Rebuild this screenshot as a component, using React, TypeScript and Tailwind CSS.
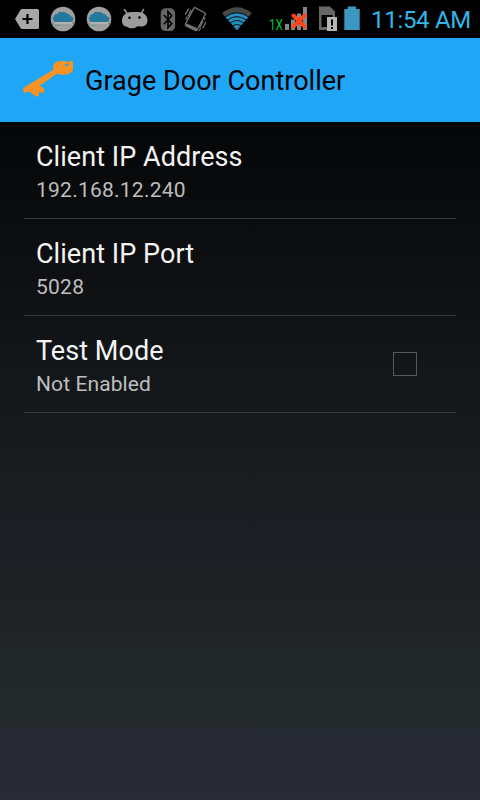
import type { ReactNode } from "react";

type IconProps = { label: string; box: string; className: string; children: ReactNode };

function StatusIcon({ label, box, className, children }: IconProps) {
  return (
    <svg aria-label={label} viewBox={box} className={`h-[38px] shrink-0 ${className}`}>
      {children}
    </svg>
  );
}

function CloudIcon({ className }: { className: string }) {
  return (
    <StatusIcon label="Cloud" box="0 0 26 38" className={`w-[26px] ${className}`}>
      <circle cx="13" cy="19" r="12.3" fill="#a0a0a0" />
      <path d="M1 16.5L5 21L2 26M25 16.5L21.5 21L24.5 26" stroke="#555" strokeWidth="0.8" strokeDasharray="1 1" fill="none" />
      <path
        d="M6 22A3.2 3.2 0 0 1 4 16.5C4.4 14.6 6 13.8 7.2 14.2C7.8 12 10.3 11 12.2 12.3C14.3 11.3 16.5 12.4 17.2 14C19 13.4 20.2 14.6 20.5 16.2C22.8 16.3 23.6 18 23 19.8C22.6 21.2 21.8 22 20.5 22Z"
        fill="#247a9d"
      />
      <path d="M4 23H22" stroke="#c3c3c3" strokeWidth="1" />
      <path d="M5 25.3H10" stroke="#4d8ca8" strokeWidth="1" strokeDasharray="1.5 0.6" />
      <path d="M11 25.3H19" stroke="#8c9499" strokeWidth="0.8" strokeDasharray="1 0.8" />
    </StatusIcon>
  );
}

function StatusBar() {
  return (
    <div className="flex h-[38px] shrink-0 items-start bg-black">
      <StatusIcon label="Add" box="15 0 24 38" className="ml-[15px] w-6">
        <path d="M15 19L20.5 10Q21 9 22.3 9H37.5Q39 9 39 10.5V27.5Q39 29 37.5 29H22.3Q21 29 20.5 28Z" fill="#a8a8a8" />
        <path d="M27.5 14V24M22.5 19H32.5" stroke="#000" strokeWidth="2.2" />
      </StatusIcon>
      <CloudIcon className="ml-[11px]" />
      <CloudIcon className="ml-[10px]" />
      <StatusIcon label="Android" box="121 0 28 38" className="ml-[9px] w-7">
        <path d="M124.5 9.5L127.5 14M143.5 9.5L141 14" stroke="#9c9c9c" strokeWidth="1.5" strokeLinecap="round" />
        <path
          d="M122 21C122 15.5 126 12 131 12H138C143 12 147.5 15 147.5 20.5C147.5 25 144 27.2 139.5 26.3C137.5 26 136.5 26.8 134.8 27.8C132.5 29 129 28 127 26.7C124 26.5 122 24.2 122 21Z"
          fill="#9c9c9c"
        />
        <circle cx="129.5" cy="17.7" r="1.3" fill="#000" />
        <circle cx="139.5" cy="17.5" r="1.3" fill="#000" />
      </StatusIcon>
      <StatusIcon label="Bluetooth" box="160 0 16 38" className="ml-[11px] w-4">
        <rect x="160.7" y="8.3" width="14.4" height="22.8" rx="5" fill="#666" />
        <path d="M163.8 15L171.7 23.5L168 27.7V11.7L171.7 15.8L163.8 24.3" fill="none" stroke="#000" strokeWidth="1.6" />
      </StatusIcon>
      <StatusIcon label="Vibrate" box="184 0 24 38" className="ml-2 w-6">
        <g stroke="#757575" fill="none" strokeWidth="1.3">
          <path d="M193.6 8.6Q194.2 7.2 195.5 7.9L204.6 12.7Q205.8 13.3 205.2 14.5L197.2 29.8Q196.5 31 195.3 30.4L186.2 25.6Q185 25 185.6 23.8Z" />
          <path d="M185.5 26.2L187 23.5L197.7 28.5L195.8 30.9Z" fill="#757575" stroke="none" />
          <path d="M185.2 14.7L188.7 8.7M187.7 16.5L191.3 10M185.7 19.5L187.2 16.9" />
          <path d="M202.7 28.2L206 22M199.5 27.5L203.2 21M198.8 31L200.7 28M204 19.8L205 17.8" />
        </g>
      </StatusIcon>
      <StatusIcon label="Wifi" box="222 0 30 38" className="ml-[14px] w-[30px]">
        <path d="M222 12.9Q236.9 1.6 251.8 12.9L248.6 17Q236.9 8.2 225.2 17Z" fill="#474747" />
        <path d="M225.2 17Q236.9 8.2 248.6 17L236.9 30.3Z" fill="#268fbe" />
        <g fill="none" stroke="#000" strokeWidth="0.9">
          <path d="M224.7 17.3Q236.9 8.2 249.1 17.3" />
          <path d="M227.5 20Q236.9 13.3 246.3 20" />
          <path d="M230.1 23Q236.9 18 243.7 23" />
          <path d="M232.6 25.8Q236.9 22.8 241.2 25.8" />
        </g>
      </StatusIcon>
      <span className="ml-[17px] mt-[16px] w-[16px] origin-left scale-x-[0.76] whitespace-nowrap text-[15.5px] leading-[18px] text-[#08c62d]">1X</span>
      <StatusIcon label="No signal" box="285 0 23 38" className="w-[23px]">
        <path d="M285 24H289V30H285ZM291 19.5H295V30H291ZM297 13.5H301V30H297ZM303 7H307V30H303Z" fill="#858585" />
        <path d="M293.5 15.5L304.5 26.5M304.5 15.5L293.5 26.5" stroke="#ff4515" strokeWidth="4" strokeLinecap="round" />
      </StatusIcon>
      <StatusIcon label="SD card" box="319 0 18 38" className="ml-[11px] w-[18px]">
        <path fillRule="evenodd" d="M319 6.5H330L335 11.5V30H319ZM321.5 15V27H332.5V15Z" fill="#666" />
        <rect x="327" y="17" width="10" height="14" fill="#b6b6b6" />
        <path d="M331 19.5H333V25.5H331ZM331 27H333V29H331Z" fill="#000" />
      </StatusIcon>
      <StatusIcon label="Battery" box="344 0 17 38" className="ml-[7px] w-[17px]">
        <path d="M347.7 6.5H356V9H359.7V30H344.3V9H347.7Z" fill="#3c98c1" />
      </StatusIcon>
      <span className="ml-[10px] mt-[6px] whitespace-nowrap text-[24px] leading-7 tracking-[-0.3px] text-[#33b5e5]">11:54 AM</span>
    </div>
  );
}

function KeyIcon() {
  return (
    <svg aria-label="Key" viewBox="0 0 52 84" className="ml-[22px] h-[84px] w-[52px] shrink-0">
      <path
        fillRule="evenodd"
        fill="#f69322"
        d="M31 32C30.5 26 33.5 23 39 23Q43 22.7 46.5 24.3L49 22.8Q51.5 22.5 51 26V31C50.7 36 44.5 37 38.5 36.6Q36.5 36.5 35 35.8L17.5 47.8L20.5 49.2Q23 50.6 22.1 54Q20.8 55.5 18.4 54.4L16.6 53.4L17.3 56.5Q17 58.8 14.5 58.8L8 54.2Q5.5 53.2 3 54.8Q.7 54.2 1.1 51L3.2 48.8ZM42.5 26.3Q43.3 28.3 45.5 28.2L47.1 27Q44.7 25.5 42.5 26.3Z"
      />
    </svg>
  );
}

type PreferenceProps = { title: string; summary: string; numeric?: boolean; checkbox?: boolean };

function Preference({ title, summary, numeric, checkbox }: PreferenceProps) {
  return (
    <div className="mx-6 flex h-[97px] items-center justify-between border-b border-[#36393b] pl-3">
      <div className="pt-[3px]">
        <div className="text-[27px] leading-8 tracking-[0.05px] text-[#f3f3f3]">{title}</div>
        <div className={`mt-[5px] text-[21px] leading-[25px] text-[#bebebe] ${numeric ? "tracking-[0.24px]" : "tracking-[0.1px]"}`}>
          {summary}
        </div>
      </div>
      {checkbox && (
        <button role="checkbox" aria-checked="false" aria-label={title} className="mr-[39px] size-6 border border-[#555759]" />
      )}
    </div>
  );
}

export default function App() {
  return (
    <main className="flex h-[800px] w-[480px] flex-col overflow-hidden bg-black font-[Roboto,sans-serif]">
      <StatusBar />
      <header className="flex h-[84px] shrink-0 items-center bg-[#1fa6f7]">
        <KeyIcon />
        <h1 className="ml-[11px] pt-[2px] text-[27px] leading-8 tracking-[0.02px] text-black">Grage Door Controller</h1>
      </header>
      <section className="flex-1 bg-[linear-gradient(to_bottom,#050607_0%,#0b0c0e_14%,#111215_28.5%,#12171a_36%,#15191b_44%,#1a1e1f_55%,#1a1d22_58%,#202326_73.5%,#21272a_79%,#252a2c_89.2%,#252932_89.5%,#282b34_100%)]">
        <Preference title="Client IP Address" summary="192.168.12.240" numeric />
        <Preference title="Client IP Port" summary="5028" numeric />
        <Preference title="Test Mode" summary="Not Enabled" checkbox />
      </section>
    </main>
  );
}
